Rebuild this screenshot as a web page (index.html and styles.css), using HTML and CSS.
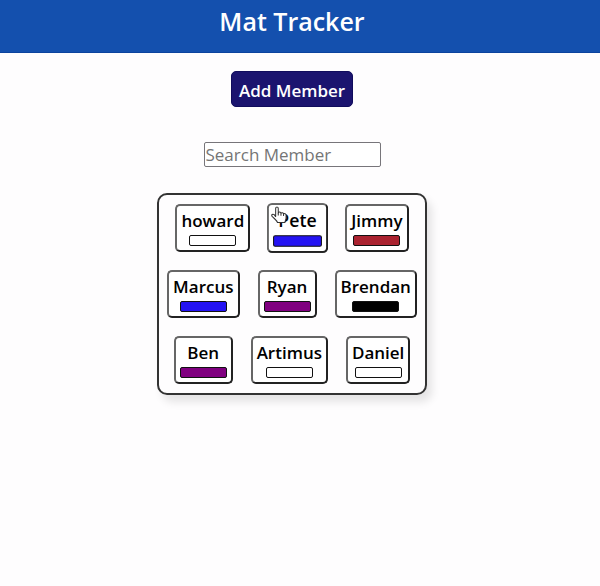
FILE: index.html
```html
<!DOCTYPE html>
<html lang="en">
<head>
<meta charset="utf-8">
<meta name="viewport" content="width=device-width, initial-scale=1">
<title>Mat Tracker</title>
<link rel="stylesheet" href="styles.css">
</head>
<body>
<header class="header"><h1>Mat Tracker</h1></header>
<main class="main">
  <button class="add" type="button">Add Member</button>
  <input class="search" type="text" placeholder="Search Member" aria-label="Search Member">
  <section class="members">
    <button class="member" type="button">howard<span class="belt white"></span></button>
    <button class="member active" type="button">Pete<span class="belt blue"></span>
      <svg class="cursor" viewBox="0 0 16 18" aria-hidden="true"><path d="M4.500 10V2.300c0-2 2.500-2 2.500 0V6.500c.4-1.200 2.400-1 2.600.3.600-.9 2.300-.6 2.500.6.800-.7 2.400-.2 2.400 1.100v3c0 1.700-1.100 2.300-1.100 4.300H6.200c0-1.700-2.600-3.300-5.100-6-1.200-1.500.6-2.700 2-1.600z" fill="#fff" stroke="#333" stroke-linejoin="round"/><path d="M7 6.500V9M9.600 6.800v2.400M12.100 7.500v2" fill="none" stroke="#333"/></svg>
    </button>
    <button class="member" type="button">Jimmy<span class="belt brown"></span></button>
    <button class="member" type="button">Marcus<span class="belt blue"></span></button>
    <button class="member" type="button">Ryan<span class="belt purple"></span></button>
    <button class="member" type="button">Brendan<span class="belt black"></span></button>
    <button class="member" type="button">Ben<span class="belt purple"></span></button>
    <button class="member" type="button">Artimus<span class="belt white"></span></button>
    <button class="member" type="button">Daniel<span class="belt white"></span></button>
  </section>
</main>
</body>
</html>
```
FILE: styles.css
```css
* { box-sizing: border-box; }

body {
  margin: 0;
  background: #fefdfe;
  color: #000;
  font-family: "Trebuchet MS", "Open Sans", sans-serif;
}

.header {
  padding: 3px 16px 13px 0;
  background: #1450ae;
  border-bottom: 1px solid #0c439e;
  color: #fff;
  text-align: center;
}

h1 {
  margin: 0;
  font-size: 25px;
  font-weight: 600;
  line-height: 36px;
}

.main {
  display: flex;
  flex-direction: column;
  align-items: center;
  padding: 18px 16px 40px 0;
}

button, input { font-family: inherit; }

.add {
  padding: 6px 7px 2px;
  border: 1px solid #100c5c;
  border-radius: 5px;
  background: #1b146f;
  color: #fff;
  font-size: 17px;
  font-weight: 600;
  line-height: 26px;
}

.search {
  width: 177px;
  height: 25px;
  margin: 35px 0 26px;
  padding: 0 1px;
  border: 1px solid #77757a;
  border-radius: 2px;
  background: #fff;
  font-size: 17px;
}

.search::placeholder { color: #757575; }

.members {
  display: flex;
  flex-wrap: wrap;
  justify-content: center;
  gap: 18px;
  width: 270px;
  padding: 9px 0;
  border: 2px solid #333;
  border-radius: 10px;
  box-shadow: 5px 7px 9px rgba(0, 0, 0, 0.1);
}

.member {
  position: relative;
  display: flex;
  flex-direction: column;
  align-items: center;
  gap: 2px;
  padding: 3px 4px 4px;
  border: 2px solid;
  border-color: #666 #222 #222 #666;
  border-radius: 5px;
  background: #fff;
  color: #000;
  font-size: 17px;
  font-weight: 600;
  line-height: 24px;
}

.active { transform: scale(1.04); }

.belt {
  width: 47px;
  height: 11px;
  border: 1px solid #111;
  border-radius: 2px;
}

.white { background: #fff; }
.blue { background: #2413f3; }
.brown { background: #aa2330; }
.purple { background: #800080; }
.black { background: #000; }

.cursor {
  position: absolute;
  top: 1px;
  left: 2px;
  width: 16px;
  height: 18px;
}
```
